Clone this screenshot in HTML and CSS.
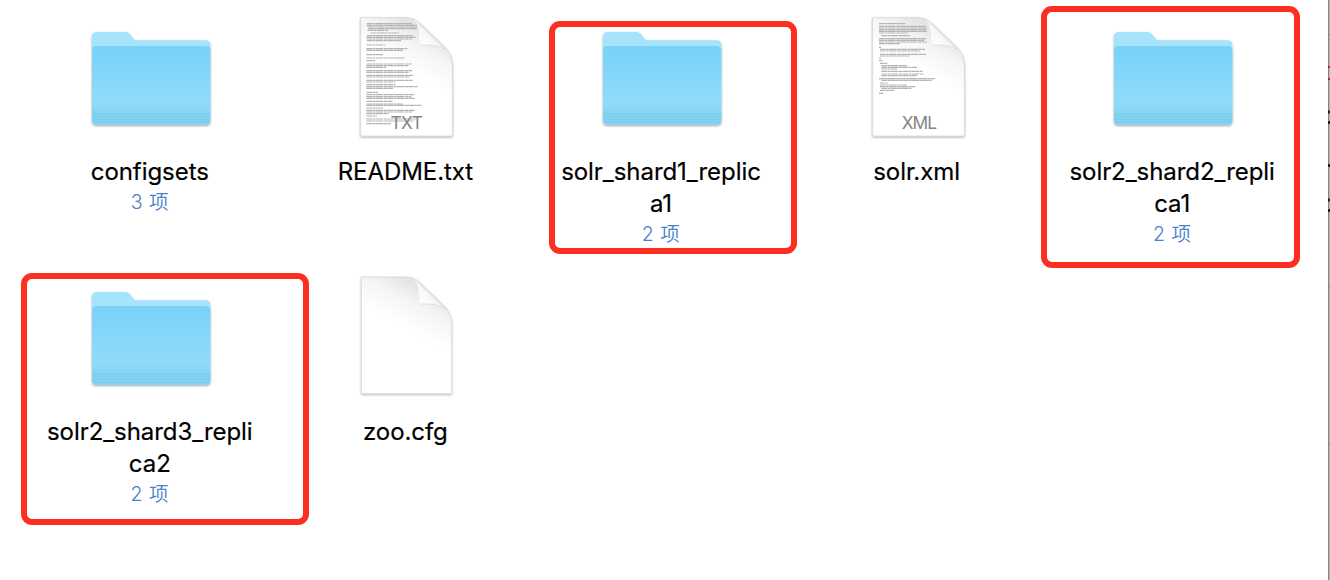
FILE: index.html
```html
<!DOCTYPE html>
<html lang="zh-CN">
<head>
<meta charset="utf-8">
<title>Finder</title>
<link rel="stylesheet" href="styles.css">
</head>
<body>
<svg class="defs" aria-hidden="true">
  <defs>
    <linearGradient id="front" x1="0" y1="0" x2="0" y2="1">
      <stop offset="0" stop-color="#79d1f8"/>
      <stop offset=".72" stop-color="#91dbfa"/>
      <stop offset=".87" stop-color="#83d3f2"/>
      <stop offset="1" stop-color="#83d3f4"/>
    </linearGradient>
    <linearGradient id="paper" gradientUnits="userSpaceOnUse" x1="226" y1="70" x2="165" y2="185">
      <stop offset="0" stop-color="#e4e4e4"/>
      <stop offset=".4" stop-color="#f5f5f5"/>
      <stop offset="1" stop-color="#fff"/>
    </linearGradient>
    <linearGradient id="curl" gradientUnits="userSpaceOnUse" x1="226" y1="118" x2="262" y2="82">
      <stop offset="0" stop-color="#fff"/>
      <stop offset=".65" stop-color="#f8f8f8"/>
      <stop offset="1" stop-color="#e4e4e4"/>
    </linearGradient>
    <filter id="soft" x="-10%" y="-10%" width="120%" height="120%">
      <feDropShadow dx="0" dy="3" stdDeviation="2.5" flood-color="#000" flood-opacity=".36"/>
    </filter>
    <symbol id="folder" viewBox="0 0 435 345">
      <g filter="url(#soft)">
        <path d="M36 50Q36 36 51 36H137Q146 36 151 44L160 56Q164 61 172 61H377Q391 61 391 76V302Q391 314 379 314H48Q36 314 36 302Z" fill="#a6e3fd"/>
        <path d="M36 91Q36 78 49 78H378Q391 78 391 91V302Q391 314 379 314H48Q36 314 36 302Z" fill="url(#front)"/>
      </g>
      <path d="M37 283H390M37 291H390M37 299H390M39 307H388" stroke="#74c6e8" stroke-width="2"/>
    </symbol>
    <symbol id="page" viewBox="0 0 375 435">
      <path d="M47 38H180Q207 38 224 54L299 126Q322 149 322 184V393H47Z" fill="url(#paper)" stroke="#d2d2d2" stroke-width="2" filter="url(#soft)"/>
      <path d="M205 43Q224 57 224 120Q276 117 306 135L224 54Q216 46 205 43Z" fill="url(#curl)"/>
      <path d="M224 120Q276 117 306 135" stroke="#d6d6d6" stroke-width="2" fill="none"/>
      <path d="M221 54L306 135" stroke="#d2d2d2" stroke-width="2" fill="none"/>
    </symbol>
  </defs>
</svg>

<main class="files">
  <figure class="file">
    <svg class="folder"><use href="#folder"/></svg>
    <figcaption><span class="name">configsets</span><span class="count">3 项</span></figcaption>
  </figure>
  <figure class="file">
    <svg class="doc" viewBox="0 0 375 435">
      <use href="#page"/>
      <path class="greek" d="M65 56H201M65 61H216M68 66H217M70 71H216M67 76H130M76 84H162M65 92H203M65 97H213M65 102H202M65 107H168M64 120H121M64 131H187M64 136H173M64 149H114M64 159H180M64 167H90M64 177H201M64 182H191M64 187H123M64 197H201M64 202H192M64 211H205M64 216H195M64 226H203M64 231H150M64 239H152M64 245H218M64 250H144M64 262H99M64 269H207M64 275H199M64 280H210M64 289H143M64 297H173M64 301H230M64 309H116M64 316H210M64 321H202M64 326H131M64 333H96M64 342H214M64 348H205M64 356H138"/>
      <text x="185" y="372" textLength="97" class="kind">TXT</text>
    </svg>
    <figcaption><span class="name">README.txt</span></figcaption>
  </figure>
  <figure class="file">
    <svg class="folder"><use href="#folder"/></svg>
    <figcaption><span class="name">solr_shard1_replic<br>a1</span><span class="count">2 项</span></figcaption>
  </figure>
  <figure class="file">
    <svg class="doc" viewBox="0 0 375 435">
      <use href="#page"/>
      <path class="greek" d="M66 56H145M66 64H206M66 69H211M66 74H207M66 79H210M66 84H153M73 92H159M66 101H208M66 106H201M66 111H210M66 116H129M66 127H72M69 133H204M69 138H189M69 148H207M69 153H160M66 160H72M66 167H76M69 175H91M73 182H150M73 187H180M73 192H120M73 199H197M73 207H199M73 212H180M66 221H234M73 226H224M69 234H92M69 240H150M69 245H175M73 250H164M69 256H112M66 265H79"/>
      <text x="187" y="372" textLength="106" class="kind">XML</text>
    </svg>
    <figcaption><span class="name">solr.xml</span></figcaption>
  </figure>
  <figure class="file">
    <svg class="folder"><use href="#folder"/></svg>
    <figcaption><span class="name">solr2_shard2_repli<br>ca1</span><span class="count">2 项</span></figcaption>
  </figure>
  <figure class="file">
    <svg class="folder"><use href="#folder"/></svg>
    <figcaption><span class="name">solr2_shard3_repli<br>ca2</span><span class="count">2 项</span></figcaption>
  </figure>
  <figure class="file">
    <svg class="doc blank" viewBox="0 0 375 435"><use href="#page"/></svg>
    <figcaption><span class="name">zoo.cfg</span></figcaption>
  </figure>
</main>

<div class="mark mark-shard1"></div>
<div class="mark mark-shard2"></div>
<div class="mark mark-shard3"></div>
<svg class="edge" viewBox="0 0 2 580">
  <path d="M0 0H2V580H0Z" fill="#b5b5b5"/>
  <path d="M.5 0V580" stroke="#858585"/>
  <path d="M0 34.5H2M0 286.5H2M0 444.5H2" stroke="#858585"/>
  <path d="M0 67H2M0 79H2" stroke="#a52350" stroke-width="2"/>
  <path d="M0 112H2M0 122.5H2M0 165.5H2M0 200H2M0 210.5H2" stroke="#222" stroke-width="3"/>
</svg>
</body>
</html>
```
FILE: styles.css
```css
body {
  position: relative;
  width: 1330px;
  height: 580px;
  margin: 0;
  overflow: hidden;
  background: #fff;
  color: #000;
  font-family: Inter, "Noto Sans CJK SC", sans-serif;
}

.defs {
  position: absolute;
  width: 0;
  height: 0;
}

.files {
  display: grid;
  grid-template-columns: repeat(5, 255.6px);
  grid-auto-rows: 260px;
  padding: 5px 0 0 22px;
}

.file {
  display: flex;
  flex-direction: column;
  align-items: center;
  margin: 0;
}

.folder {
  width: 145px;
  height: 115px;
  margin: 15px 0 15px 5px;
}

.doc {
  width: 125px;
  height: 145px;
  margin-left: 5px;
}

.blank {
  transform: translateY(-1.5px) scale(.985);
}

figcaption {
  display: flex;
  flex-direction: column;
  align-items: center;
  margin-top: 6px;
  text-align: center;
}

.name {
  font-size: 24px;
  line-height: 32px;
  letter-spacing: -.06px;
  white-space: nowrap;
  -webkit-text-stroke: .2px #000;
}

.count {
  color: #4b80ca;
  font-size: 19.5px;
  font-weight: 350;
  line-height: 28px;
  letter-spacing: .5px;
}

.kind {
  fill: #858585;
  font-family: Inter, sans-serif;
  font-size: 52px;
  text-anchor: middle;
}

.greek {
  fill: none;
  stroke: #b4b4b4;
  stroke-width: 3.4;
  stroke-dasharray: 17 1.2 8 1 23 1.5 11 1;
}

.mark {
  position: absolute;
  box-sizing: border-box;
  border: 6px solid #fc2e20;
  border-radius: 11px;
}

.mark-shard1 {
  left: 549px;
  top: 21px;
  width: 248px;
  height: 233px;
}

.mark-shard2 {
  left: 1040.5px;
  top: 6px;
  width: 259.5px;
  height: 262px;
}

.mark-shard3 {
  left: 21px;
  top: 273px;
  width: 287.5px;
  height: 252px;
}

.edge {
  position: absolute;
  top: 0;
  right: 0;
  width: 2px;
  height: 580px;
}
```
